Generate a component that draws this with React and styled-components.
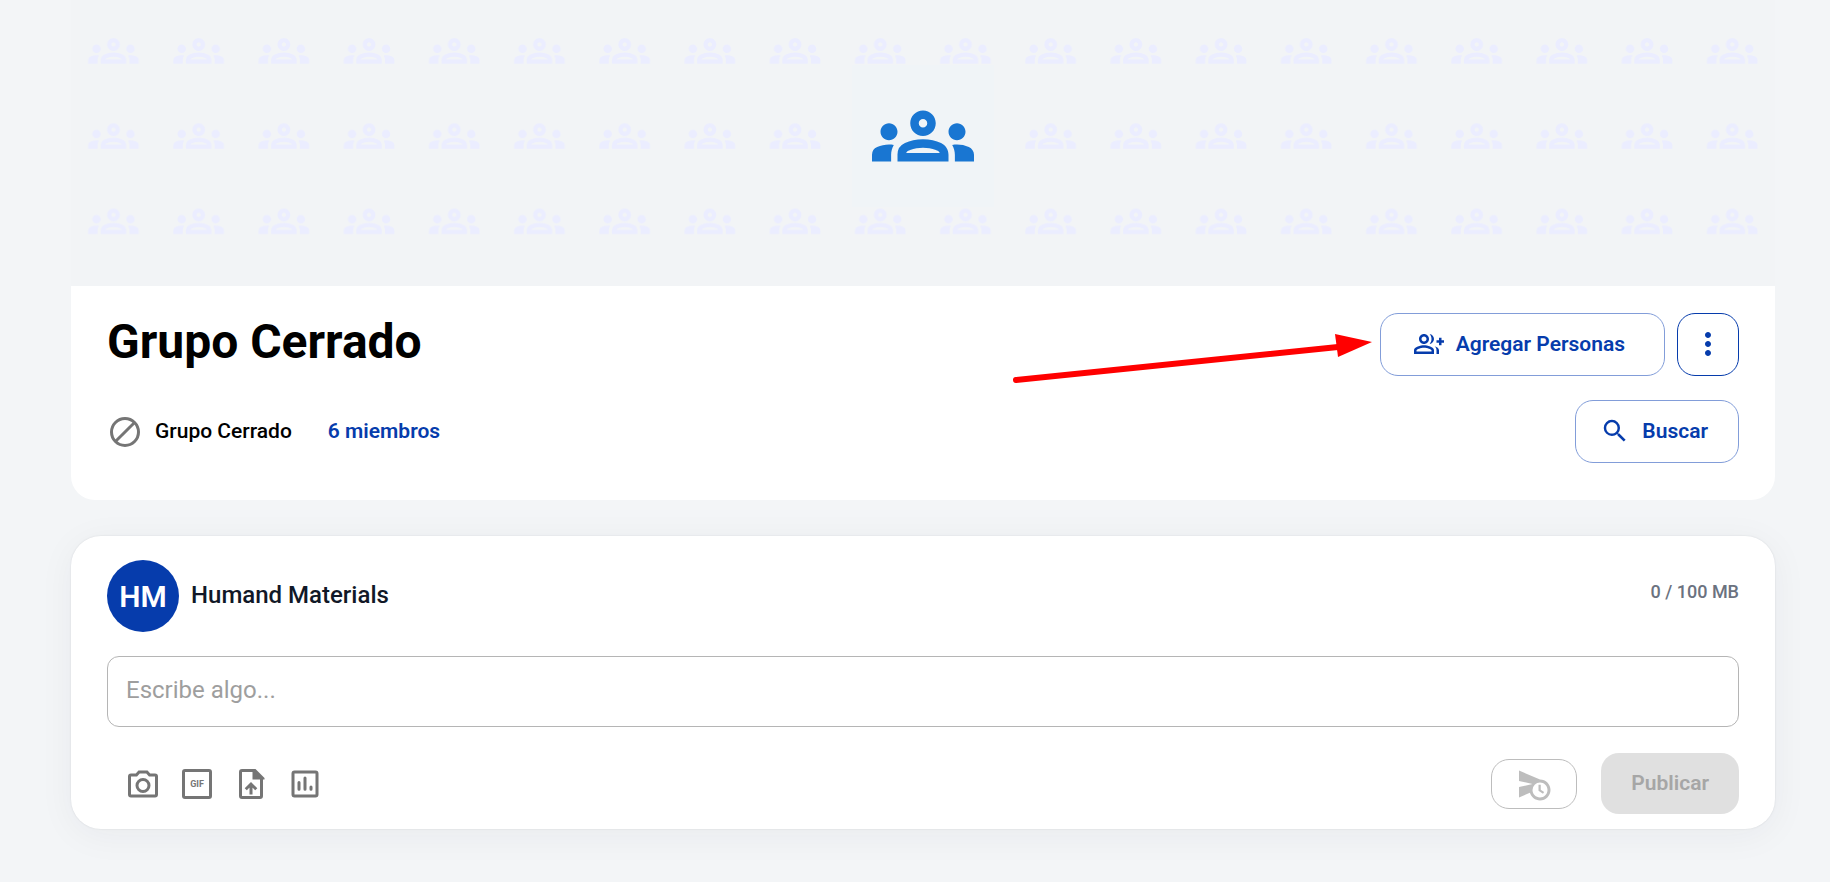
import React, {useState} from 'react'
import styled, {createGlobalStyle} from 'styled-components'
import {MdMoreVert, MdOutlineGroupAdd, MdOutlineGroups, MdScheduleSend, MdSearch} from 'react-icons/md'

const CameraIcon = () => (
    <ToolIcon viewBox="0 0 24 24">
        <path d="M9.4 4h5.2l1.8 2H20a1 1 0 0 1 1 1v12a1 1 0 0 1-1 1H4a1 1 0 0 1-1-1V7a1 1 0 0 1 1-1h3.6z" />
        <circle cx="12" cy="13" r="4" />
    </ToolIcon>
)

const GifIcon = () => (
    <ToolIcon viewBox="0 0 24 24">
        <rect x="3" y="3" width="18" height="18" rx="1" />
        <GifText x="12" y="14">GIF</GifText>
    </ToolIcon>
)

const UploadIcon = () => (
    <ToolIcon viewBox="0 0 24 24">
        <path d="M14.5 3H6a1 1 0 0 0-1 1v16a1 1 0 0 0 1 1h12a1 1 0 0 0 1-1V7.5" />
        <path d="M13 2h2l6 6v1h-8z" fill="currentColor" stroke="none" />
        <path d="M12 19v-6M8.500 15.500 12 12l3.500 3.500" />
    </ToolIcon>
)

const PollIcon = () => (
    <ToolIcon viewBox="0 0 24 24">
        <rect x="4" y="4" width="16" height="16" rx="1" />
        <path d="M8 11v4.500M12 8v7.500M16 14v1.500" strokeLinecap="round" />
    </ToolIcon>
)

const tools = [
    {label: 'Agregar foto', Icon: CameraIcon},
    {label: 'Agregar GIF', Icon: GifIcon},
    {label: 'Subir archivo', Icon: UploadIcon},
    {label: 'Crear encuesta', Icon: PollIcon},
]

const Banner = () => (
    <BannerArt viewBox="0 0 1704 286" preserveAspectRatio="xMidYMid slice" aria-hidden="true">
        <defs>
            <pattern id="groups" x="0" y="8.4" width="85.2" height="85.2" patternUnits="userSpaceOnUse">
                <MdOutlineGroups x="17" y="17" size={51} color="#ebedff" />
            </pattern>
        </defs>
        <rect y="9" width="1704" height="255" fill="url(#groups)" />
        <rect x="781" y="65" width="142" height="142" fill="#f0f4f7" />
        <MdOutlineGroups x="801" y="85" size={102} color="#1976d2" />
    </BannerArt>
)

const GroupHeader = () => (
    <HeaderCard>
        <Row>
            <Title>Grupo Cerrado</Title>
            <Actions>
                <Arrow viewBox="0 0 360 56" aria-hidden="true">
                    <path d="M4 50 326 17" stroke="#f00" strokeWidth="6" strokeLinecap="round" />
                    <path d="M323 4 360 12 326 27z" fill="#f00" />
                </Arrow>
                <AddButton type="button">
                    <MdOutlineGroupAdd size={30} />
                    Agregar Personas
                </AddButton>
                <MoreButton type="button" aria-label="Más opciones">
                    <MdMoreVert size={36} />
                </MoreButton>
            </Actions>
        </Row>
        <Row>
            <Meta>
                <BlockIcon viewBox="0 0 24 24" aria-hidden="true">
                    <circle cx="12" cy="12" r="9" />
                    <path d="M5.800 18.200 18.200 5.800" />
                </BlockIcon>
                <Privacy>Grupo Cerrado</Privacy>
                <Members href="#miembros">6 miembros</Members>
            </Meta>
            <SearchButton type="button">
                <MdSearch size={30} />
                Buscar
            </SearchButton>
        </Row>
    </HeaderCard>
)

const Composer = () => {
    const [text, setText] = useState('')

    return (
        <ComposerCard>
            <Row>
                <Author>
                    <Avatar>HM</Avatar>
                    <Name>Humand Materials</Name>
                </Author>
                <Quota>0 / 100 MB</Quota>
            </Row>
            <PostInput
                aria-label="Escribe algo"
                placeholder="Escribe algo..."
                value={text}
                onChange={(e) => setText(e.target.value)}
            />
            <Row>
                <Tools>
                    {tools.map(({label, Icon}) => (
                        <ToolButton key={label} type="button" aria-label={label}>
                            <Icon />
                        </ToolButton>
                    ))}
                </Tools>
                <Submit>
                    <ScheduleButton type="button" aria-label="Programar" disabled={!text}>
                        <MdScheduleSend size={36} />
                    </ScheduleButton>
                    <PublishButton type="button" disabled={!text}>Publicar</PublishButton>
                </Submit>
            </Row>
        </ComposerCard>
    )
}

const App = () => (
    <Page>
        <GlobalStyle />
        <Banner />
        <GroupHeader />
        <Composer />
    </Page>
)

export default App


const GlobalStyle = createGlobalStyle`
* {
    box-sizing: border-box;
}

body {
    margin: 0;
    background-color: #f3f5f7;
    font-family: Roboto, "Liberation Sans", sans-serif;
}

button, input {
    font-family: inherit;
}
`;

const Page = styled.main`
display: flex;
flex-direction: column;
padding: 0 55px 48px 71px;
`;

const BannerArt = styled.svg`
display: block;
width: 100%;
height: 286px;
background-color: #f2f4f6;
`;

const HeaderCard = styled.section`
display: flex;
flex-direction: column;
gap: 24px;
padding: 27px 36px 37px;
margin-bottom: 36px;
background-color: #fff;
border-radius: 0 0 24px 24px;
`;

const Row = styled.div`
display: flex;
justify-content: space-between;
align-items: center;
`;

const Title = styled.h1`
margin: 0;
padding-bottom: 6px;
font-size: 48px;
line-height: 56px;
font-weight: 700;
color: #000;
`;

const Actions = styled.div`
position: relative;
display: flex;
gap: 12px;
`;

// floats to the left of the buttons, over the card
const Arrow = styled.svg`
position: absolute;
top: 17px;
right: calc(100% + 8px);
width: 360px;
height: 56px;
fill: none;
pointer-events: none;
`;

const OutlineButton = styled.button`
display: flex;
align-items: center;
justify-content: center;
gap: 12px;
height: 63px;
border: 1px solid #829dd9;
border-radius: 18px;
background-color: transparent;
color: #063cac;
font-size: 21px;
font-weight: 600;
cursor: pointer;
`;

const AddButton = styled(OutlineButton)`
padding: 0 39px 2px 33px;
`;

const SearchButton = styled(OutlineButton)`
padding: 0 30px 2px 24px;
`;

const MoreButton = styled(OutlineButton)`
width: 62px;
padding: 0 0 2px;
border-color: #063cac;
`;

const Meta = styled.div`
display: flex;
align-items: center;
font-size: 21px;
line-height: 32px;
`;

const BlockIcon = styled.svg`
width: 36px;
height: 36px;
margin-right: 12px;
fill: none;
stroke: #757575;
stroke-width: 2;
`;

const Privacy = styled.span`
margin-right: 36px;
padding-bottom: 2px;
font-weight: 500;
color: #000;
`;

const Members = styled.a`
padding-bottom: 2px;
font-weight: 600;
color: #063cac;
text-decoration: none;
`;

const ComposerCard = styled.section`
display: flex;
flex-direction: column;
padding: 24px 36px 15px;
background-color: #fff;
border-radius: 30px;
box-shadow: 0 0 2px rgba(30, 40, 60, 0.12), 0 6px 36px rgba(30, 40, 60, 0.05);
`;

const Author = styled.div`
display: flex;
align-items: center;
gap: 12px;
`;

const Avatar = styled.div`
display: flex;
align-items: center;
justify-content: center;
width: 72px;
height: 72px;
border-radius: 50%;
background-color: #063cac;
color: #fff;
font-size: 30px;
font-weight: 600;
`;

const Name = styled.span`
padding-bottom: 2px;
font-size: 24px;
font-weight: 500;
color: #111827;
`;

const Quota = styled.span`
padding-bottom: 10px;
font-size: 18px;
font-weight: 500;
color: #6b7280;
`;

const PostInput = styled.input`
width: 100%;
height: 71px;
margin: 24px 0 26px;
padding: 0 18px 4px;
border: 1px solid #b5b5b5;
border-radius: 12px;
font-size: 24px;
color: #111827;

&::placeholder {
    color: #9e9e9e;
    opacity: 1;
}
`;

const Tools = styled.div`
display: flex;
padding-left: 9px;
`;

const ToolButton = styled.button`
display: flex;
padding: 9px;
border: none;
background: none;
color: #757575;
cursor: pointer;
`;

const ToolIcon = styled.svg`
width: 36px;
height: 36px;
fill: none;
stroke: currentColor;
stroke-width: 2;
`;

const GifText = styled.text`
font-size: 6px;
font-weight: 700;
text-anchor: middle;
fill: currentColor;
stroke: none;
`;

const Submit = styled.div`
display: flex;
align-items: center;
gap: 24px;
`;

const ScheduleButton = styled.button`
display: flex;
align-items: center;
justify-content: center;
width: 86px;
height: 50px;
padding: 0;
border: 1px solid #bdbdbd;
border-radius: 18px;
background-color: transparent;
color: #bdbdbd;
`;

const PublishButton = styled.button`
height: 61px;
padding: 0 30px 2px;
border: none;
border-radius: 18px;
background-color: #e0e0e0;
color: #a6a6a6;
font-size: 21px;
font-weight: 600;
`;
